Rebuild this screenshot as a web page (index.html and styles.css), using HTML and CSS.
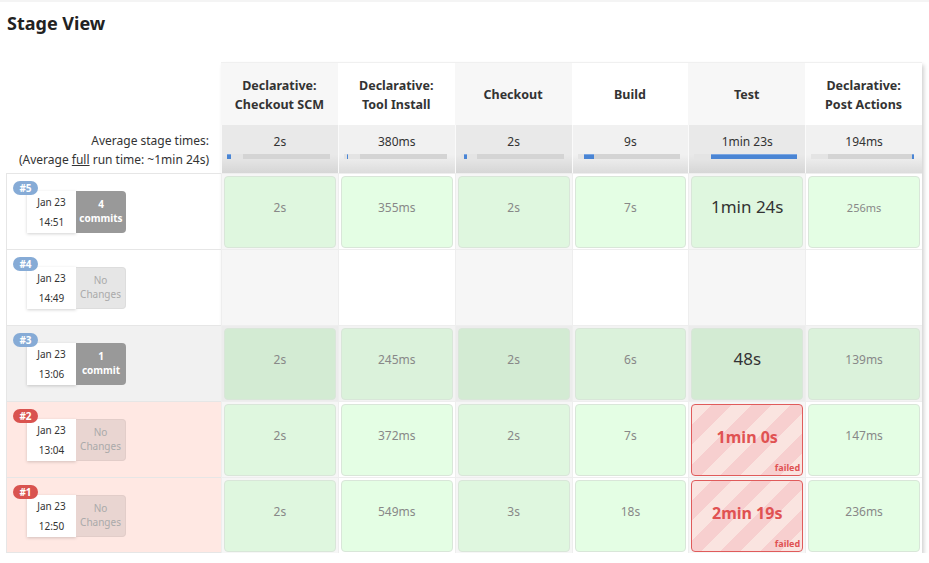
FILE: index.html
```html
<!DOCTYPE html>
<html>
<head>
<meta charset="utf-8">
<link rel="stylesheet" href="styles.css">
</head>
<body>
<h2 class="title">Stage View</h2>
<div class="table">
  <div class="left">
    <div class="l-head"></div>
    <div class="l-avg">
      <div>Average stage times:</div>
      <div>(Average <u>full</u> run time: ~1min 24s)</div>
    </div>
    <div class="l-row">
      <span class="badge">#5</span>
      <div class="date"><div>Jan 23</div><div>14:51</div></div>
      <div class="changes commits"><b>4</b><b>commits</b></div>
    </div>
    <div class="l-row">
      <span class="badge">#4</span>
      <div class="date"><div>Jan 23</div><div>14:49</div></div>
      <div class="changes none"><span>No</span><span>Changes</span></div>
    </div>
    <div class="l-row grey">
      <span class="badge">#3</span>
      <div class="date"><div>Jan 23</div><div>13:06</div></div>
      <div class="changes commits"><b>1</b><b>commit</b></div>
    </div>
    <div class="l-row pink">
      <span class="badge red">#2</span>
      <div class="date"><div>Jan 23</div><div>13:04</div></div>
      <div class="changes none"><span>No</span><span>Changes</span></div>
    </div>
    <div class="l-row pink">
      <span class="badge red">#1</span>
      <div class="date"><div>Jan 23</div><div>12:50</div></div>
      <div class="changes none"><span>No</span><span>Changes</span></div>
    </div>
  </div>
  <div class="stages">
    <div class="h odd">Declarative:<br>Checkout SCM</div>
    <div class="h">Declarative:<br>Tool Install</div>
    <div class="h odd">Checkout</div>
    <div class="h">Build</div>
    <div class="h odd">Test</div>
    <div class="h">Declarative:<br>Post Actions</div>

    <div class="avg odd"><div>2s</div><div class="bar"><i class="lite"></i><i class="blue" style="left:0%;width:3.5%"></i></div></div>
    <div class="avg"><div>380ms</div><div class="bar"><i class="lite"></i><i class="blue" style="left:2.9%;width:1.2%"></i></div></div>
    <div class="avg odd"><div>2s</div><div class="bar"><i class="lite"></i><i class="blue" style="left:3.6%;width:3%"></i></div></div>
    <div class="avg"><div>9s</div><div class="bar"><i class="lite"></i><i class="blue" style="left:6.7%;width:9.6%"></i></div></div>
    <div class="avg odd"><div>1min 23s</div><div class="bar"><i class="lite"></i><i class="blue" style="left:16%;width:84%"></i></div></div>
    <div class="avg"><div>194ms</div><div class="bar"><i class="lite"></i><i class="blue" style="left:98.5%;width:1.5%"></i></div></div>

    <div class="c odd"><div class="ok">2s</div></div>
    <div class="c"><div class="ok">355ms</div></div>
    <div class="c odd"><div class="ok">2s</div></div>
    <div class="c"><div class="ok">7s</div></div>
    <div class="c odd"><div class="ok big">1min 24s</div></div>
    <div class="c"><div class="ok small">256ms</div></div>

    <div class="c odd"></div>
    <div class="c"></div>
    <div class="c odd"></div>
    <div class="c"></div>
    <div class="c odd"></div>
    <div class="c"></div>

    <div class="c odd g"><div class="ok">2s</div></div>
    <div class="c g"><div class="ok">245ms</div></div>
    <div class="c odd g"><div class="ok">2s</div></div>
    <div class="c g"><div class="ok">6s</div></div>
    <div class="c odd g"><div class="ok big">48s</div></div>
    <div class="c g"><div class="ok">139ms</div></div>

    <div class="c odd"><div class="ok">2s</div></div>
    <div class="c"><div class="ok">372ms</div></div>
    <div class="c odd"><div class="ok">2s</div></div>
    <div class="c"><div class="ok">7s</div></div>
    <div class="c odd"><div class="fail"><span>1min 0s</span><em>failed</em></div></div>
    <div class="c"><div class="ok">147ms</div></div>

    <div class="c odd"><div class="ok">2s</div></div>
    <div class="c"><div class="ok">549ms</div></div>
    <div class="c odd"><div class="ok">3s</div></div>
    <div class="c"><div class="ok">18s</div></div>
    <div class="c odd"><div class="fail"><span>2min 19s</span><em>failed</em></div></div>
    <div class="c"><div class="ok">236ms</div></div>
  </div>
</div>
</body>
</html>
```
FILE: styles.css
```css
* { box-sizing: border-box; }
html, body { margin: 0; padding: 0; background: #fff; }
body {
  font-family: "Noto Sans", "Open Sans", sans-serif;
  color: #333;
  border-top: 2px solid #f4f4f4;
}
.title {
  margin: 0;
  padding: 9px 0 0 7px;
  font-size: 18px;
  line-height: 24px;
  font-weight: 700;
  color: #222;
  height: 60px;
}
.table { display: flex; align-items: flex-start; }
.left { width: 215px; margin-left: 6px; }
.l-head { height: 63px; }
.l-avg {
  height: 48px;
  text-align: right;
  padding: 6px 12px 0 0;
  font-size: 12px;
  line-height: 19px;
  color: #333;
}
.l-row {
  position: relative;
  height: 76px;
  border-top: 1px solid #e6e6e6;
  border-left: 1px solid #e6e6e6;
  padding: 17px 0 0 20px;
  display: flex;
  align-items: flex-start;
}
.l-row:last-child { border-bottom: 1px solid #e6e6e6; }
.l-row.grey { background: #f1f1f1; }
.l-row.pink { background: #ffe8e3; }
.badge {
  position: absolute;
  left: 6px;
  top: 7px;
  width: 25px;
  height: 14px;
  border-radius: 7px;
  background: #86abd6;
  color: #fff;
  font-size: 10px;
  font-weight: 700;
  line-height: 14px;
  text-align: center;
  z-index: 2;
}
.badge.red { background: #d9534f; }
.date {
  width: 49px;
  height: 42px;
  background: #fff;
  box-shadow: 0 1px 3px rgba(0,0,0,.18);
  font-size: 10px;
  line-height: 20px;
  text-align: center;
  padding-top: 1px;
  color: #333;
}
.changes {
  width: 50px;
  height: 42px;
  border-radius: 0 4px 4px 0;
  display: flex;
  flex-direction: column;
  align-items: center;
  justify-content: center;
  padding-bottom: 3px;
  font-size: 10px;
  line-height: 14px;
}
.commits { background: #999; color: #fff; }
.none { background: #e6e6e6; color: #aaa; border: 1px solid #ddd; border-left: 0; }
.pink .none { background: #e9d5d1; border-color: #e2cdc9; }

.stages {
  width: 701px;
  display: grid;
  grid-template-columns: repeat(6, 1fr);
  grid-template-rows: 63px 48px repeat(5, 76px);
  box-shadow: 2px 3px 4px rgba(0,0,0,.18);
  margin-left: 0;
}
.h {
  display: flex;
  align-items: center;
  justify-content: center;
  text-align: center;
  font-weight: 700;
  font-size: 12.5px;
  line-height: 19px;
  color: #333;
  background: #fff;
  border-top: 1px solid #f0f0f0;
  padding-top: 1px;
}
.h.odd { background: #f7f7f7; }
.avg {
  background: linear-gradient(#f1f1f1 0%, #f1f1f1 62%, #dcdcdc 100%);
  text-align: center;
  font-size: 12px;
  line-height: 18px;
  padding-top: 8px;
  border-left: 1px solid #fafafa;
  color: #333;
}
.avg.odd { background: linear-gradient(#e9e9e9 0%, #e9e9e9 62%, #d6d6d6 100%); }
.bar {
  position: relative;
  height: 5px;
  margin: 3px 8px 0 5px;
  background: #d4d4d4;
}
.bar i { position: absolute; top: 0; bottom: 0; }
.bar .lite { left: 0; width: 16%; background: #e4e4e4; }
.bar .blue { background: #4a85d4; border-top: 1px solid #7aa6e2; min-width: 1px; }
.c {
  background: #fff;
  padding: 2px 2px 1px 2px;
  border-left: 1px solid #eee;
  border-top: 1px solid #eee;
}
.c.odd { background: #f6f6f6; }
.c.g { background: #f3f3f3; }
.c.odd.g { background: #ececec; }
.ok {
  height: 100%;
  border: 1px solid #d9e6d9;
  border-radius: 4px;
  background: #e4fee4;
  display: flex;
  align-items: center;
  justify-content: center;
  padding-bottom: 10px;
  font-size: 12px;
  color: #888;
}
.odd .ok { background: #dff7df; }
.g .ok { background: #dbf2db; }
.odd.g .ok { background: #d3ebd3; }
.ok.big { font-size: 17px; color: #333; padding-bottom: 12px; }
.ok.small { font-size: 11px; }
.fail {
  position: relative;
  height: 100%;
  border: 1px solid #e05b5b;
  border-radius: 4px;
  background: repeating-linear-gradient(135deg, #fae4e0 0px, #fae4e0 14px, #f7cfcf 14px, #f7cfcf 28px);
  display: flex;
  align-items: center;
  justify-content: center;
  padding-bottom: 6px;
  font-size: 16px;
  font-weight: 700;
  color: #e05252;
}
.fail em {
  position: absolute;
  right: 2px;
  bottom: 1px;
  font-style: normal;
  font-size: 9px;
  font-weight: 700;
  line-height: 12px;
}
```
